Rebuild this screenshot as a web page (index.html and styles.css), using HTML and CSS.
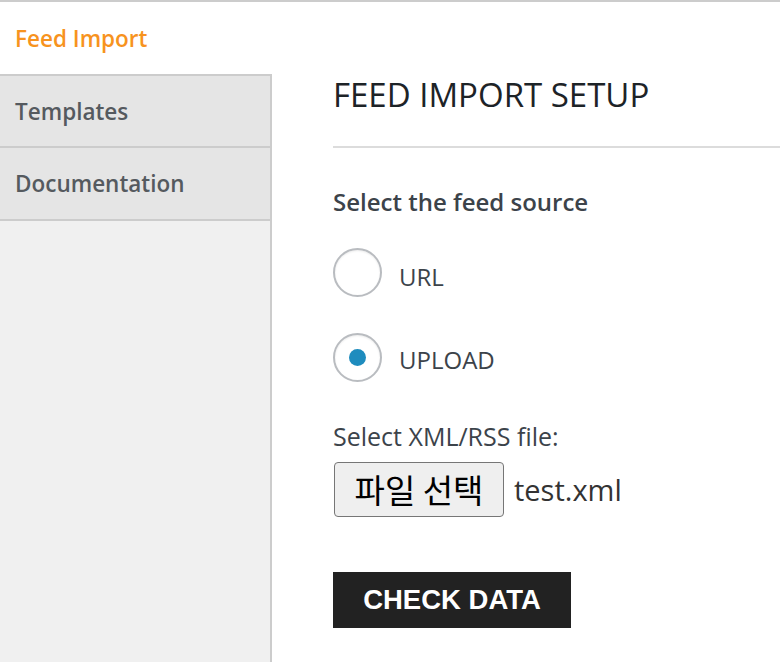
FILE: index.html
```html
<!DOCTYPE html>
<html lang="en">
<head>
<meta charset="utf-8">
<title>Feed Import Setup</title>
<link rel="stylesheet" href="styles.css">
</head>
<body>
<div class="layout">
  <nav class="sidebar">
    <a class="tab active" href="#">Feed Import</a>
    <a class="tab first" href="#">Templates</a>
    <a class="tab" href="#">Documentation</a>
    <div class="filler"></div>
  </nav>
  <main class="main">
    <h1 class="title">FEED IMPORT SETUP</h1>
    <hr class="divider">
    <h2 class="section-label">Select the feed source</h2>
    <label class="radio-row url-row">
      <span class="radio"></span>
      <span class="radio-text">URL</span>
    </label>
    <label class="radio-row upload-row">
      <span class="radio checked"></span>
      <span class="radio-text">UPLOAD</span>
    </label>
    <p class="file-label">Select XML/RSS file:</p>
    <div class="file-row">
      <button class="file-btn" type="button">파일 선택</button>
      <span class="file-name">test.xml</span>
    </div>
    <button class="check-btn" type="button">CHECK DATA</button>
  </main>
</div>
</body>
</html>
```

FILE: styles.css
```css
* { box-sizing: border-box; }
html, body { margin: 0; padding: 0; }
body {
  background: #fff;
  font-family: "Open Sans", "Noto Sans", sans-serif;
  border-top: 2px solid #cccccc;
  height: 662px;
  overflow: hidden;
}
.layout {
  display: flex;
  height: 660px;
}
.sidebar {
  width: 272px;
  flex: none;
  display: flex;
  flex-direction: column;
}
.tab {
  display: flex;
  align-items: center;
  padding-left: 15px;
  height: 73px;
  font-size: 22.5px;
  font-weight: 600;
  color: #555a5f;
  text-decoration: none;
  background: #e5e5e5;
  border-right: 2px solid #cccccc;
  border-bottom: 2px solid #cccccc;
}
.tab.active {
  height: 72px;
  background: #fff;
  color: #f7931e;
  border: none;
}
.tab.first {
  border-top: 2px solid #cccccc;
  height: 74px;
}
.filler {
  flex: 1;
  background: #f0f0f0;
  border-right: 2px solid #cccccc;
}
.main {
  flex: 1;
  padding-left: 61px;
  display: flex;
  flex-direction: column;
  align-items: flex-start;
  color: #3c434a;
}
.title {
  margin: 71px 0 0 0;
  font-size: 33px;
  font-weight: 400;
  color: #1d2327;
  line-height: 44px;
}
.divider {
  align-self: stretch;
  margin: 29px 0 0 0;
  border: none;
  height: 2px;
  background: #dcdcdc;
}
.section-label {
  margin: 39px 0 0 0;
  font-size: 24px;
  font-weight: 600;
  line-height: 30px;
  color: #3c434a;
}
.radio-row {
  display: flex;
  align-items: center;
  gap: 17px;
  margin-top: 31px;
}
.radio-row.upload-row { margin-top: 36px; }
.radio {
  width: 49px;
  height: 49px;
  border-radius: 50%;
  border: 2px solid #b9bcc0;
  background: #fff;
  box-shadow: inset 0 1px 2px rgba(0,0,0,0.08);
  display: flex;
  align-items: center;
  justify-content: center;
}
.radio.checked::after {
  content: "";
  width: 17px;
  height: 17px;
  border-radius: 50%;
  background: #1e8cbe;
}
.radio-text {
  font-size: 24px;
  line-height: 30px;
  padding-top: 8px;
  color: #3c434a;
}
.upload-row .radio-text { padding-top: 5px; }
.file-label {
  margin: 39px 0 0 0;
  font-size: 25px;
  line-height: 30px;
  color: #3c434a;
}
.file-row {
  display: flex;
  align-items: center;
  gap: 10px;
  margin-top: 11px;
}
.file-btn {
  margin-left: 1px;
  width: 170px;
  height: 55px;
  font-family: "Noto Sans CJK KR", sans-serif;
  font-size: 33px;
  line-height: 1;
  color: #000;
  background: #efefef;
  border: 1.5px solid #767676;
  border-radius: 4px;
  padding: 0;
}
.file-name {
  font-size: 29px;
  color: #333;
}
.check-btn {
  margin-top: 55px;
  width: 238px;
  height: 56px;
  background: #222222;
  color: #fff;
  border: none;
  font-family: "Liberation Sans", Arial, sans-serif;
  font-weight: 700;
  font-size: 27.5px;
  padding: 0;
}
```
